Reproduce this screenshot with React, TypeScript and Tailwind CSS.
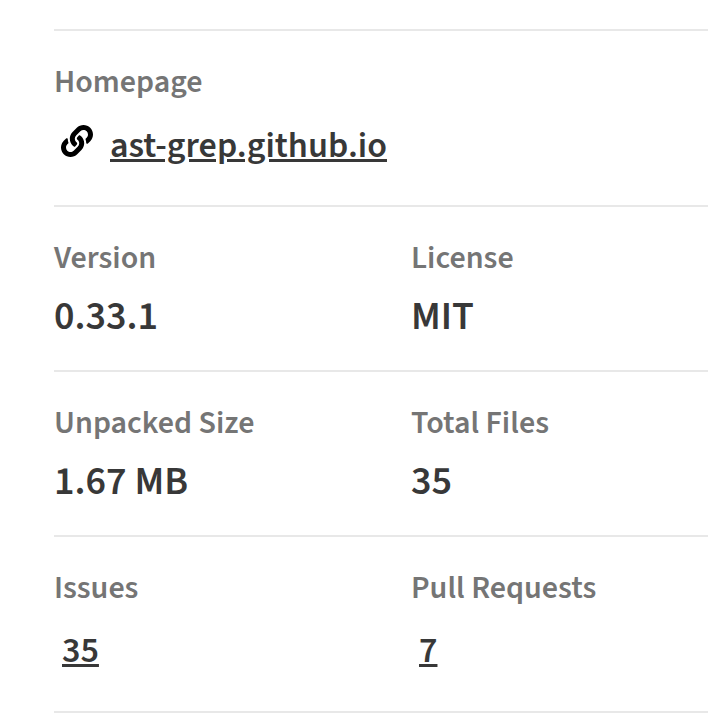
import { FaLink } from "react-icons/fa";

const font = "font-['Source_Sans_3','Noto_Sans',sans-serif]";

function Stat({ label, value }: { label: string; value: string }) {
  return (
    <div className="w-[357px] shrink-0">
      <div className="text-[32px] leading-[36px] font-semibold text-[#757575]">{label}</div>
      <div className="mt-[18px] text-[40px] leading-[46px] font-semibold text-[#383838]">{value}</div>
    </div>
  );
}

function LinkStat({ label, value }: { label: string; value: string }) {
  return (
    <div className="w-[357px] shrink-0">
      <div className="text-[32px] leading-[36px] font-semibold text-[#757575]">{label}</div>
      <div className="mt-[22px] pl-2 text-[36px] leading-[46px] font-semibold text-[#383838] underline">{value}</div>
    </div>
  );
}

export default function App() {
  return (
    <div className={`h-[724px] w-[708px] overflow-hidden bg-white pl-[54px] pt-[29px] ${font}`}>
      <div className="h-[178px] border-y-2 border-[#e8e8e8] pt-[33px]">
        <div className="text-[32px] leading-[36px] font-semibold text-[#757575]">Homepage</div>
        <div className="mt-[23px] flex items-center gap-[17px] pl-[7px]">
          <FaLink className="mb-[10px] h-[32px] w-[32px] text-black" />
          <span className="text-[36px] leading-[46px] font-semibold text-[#383838] underline">ast-grep.github.io</span>
        </div>
      </div>
      <div className="flex h-[165px] items-start border-b-2 border-[#e8e8e8] pt-[33px]">
        <Stat label="Version" value="0.33.1" />
        <Stat label="License" value="MIT" />
      </div>
      <div className="flex h-[165px] items-start border-b-2 border-[#e8e8e8] pt-[33px]">
        <Stat label="Unpacked Size" value="1.67 MB" />
        <Stat label="Total Files" value="35" />
      </div>
      <div className="flex h-[176px] items-start border-b-2 border-[#e8e8e8] pt-[33px]">
        <LinkStat label="Issues" value="35" />
        <LinkStat label="Pull Requests" value="7" />
      </div>
    </div>
  );
}
